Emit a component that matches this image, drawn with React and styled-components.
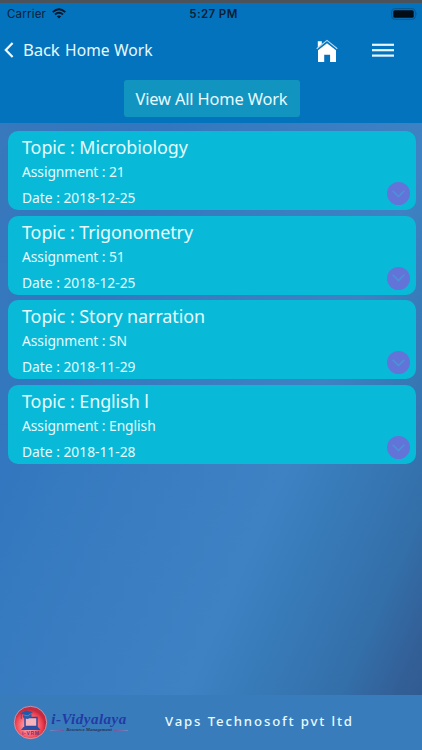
import React from 'react'
import styled, { createGlobalStyle } from 'styled-components'

const GlobalStyle = createGlobalStyle`
    * {
        box-sizing: border-box;
    }
    body {
        margin: 0;
        font-family: "Noto Sans", "Open Sans", sans-serif;
    }
`;

const Screen = styled.div`
    width: 422px;
    height: 750px;
    display: flex;
    flex-direction: column;
    overflow: hidden;
    color: #e6faff;
    background: #0473bd;
    border-top: 3px solid #4b5259;
    white-space: nowrap;
`;

const StatusBar = styled.div`
    height: 21px;
    padding: 0 4px 0 7px;
    display: grid;
    grid-template-columns: 1fr auto 1fr;
    align-items: center;
    color: #0a2036;
    font-family: Inter, sans-serif;
    font-size: 11.5px;
`;

const Carrier = styled.div`
    display: flex;
    align-items: center;
    gap: 6px;
    letter-spacing: 0.2px;
`;

const Clock = styled.div`
    font-weight: 600;
    letter-spacing: 0.4px;
    padding-left: 2px;
`;

const BatteryIcon = styled.svg`
    justify-self: end;
`;

const NavBar = styled.div`
    height: 52px;
    padding: 0 28px 0 4px;
    display: flex;
    align-items: center;
`;

const Back = styled.div`
    display: flex;
    align-items: center;
    gap: 9px;
    width: 61px;
    padding-bottom: 1px;
    font-size: 16.8px;
    letter-spacing: -0.2px;
`;

const Title = styled.div`
    flex: 1;
    font-size: 15.6px;
    letter-spacing: 0.1px;
`;

const NavIcons = styled.div`
    display: flex;
    align-items: center;
    gap: 34px;
    padding-top: 1px;
`;

const Toolbar = styled.div`
    height: 47px;
    padding: 4px 0 0 1px;
    display: flex;
    justify-content: center;
    align-items: flex-start;
`;

const ViewAllButton = styled.button`
    width: 176px;
    height: 37px;
    padding: 0 0 1px;
    border: 0;
    border-radius: 3px;
    background: #1195c0;
    color: inherit;
    font-family: inherit;
    font-size: 16.4px;
    letter-spacing: -0.15px;
`;

const List = styled.div`
    flex: 1;
    padding: 8px 6.5px 0 8px;
    display: flex;
    flex-direction: column;
    gap: 5.7px;
    background: linear-gradient(114deg, #3878bc 0%, #3277bf 22%, #397cc0 42%, #3e82c4 65%, #387bb9 74%, #336fa9 88%, #335f97 96%, #305b92 100%);
`;

const Card = styled.div`
    height: 79px;
    padding: 5px 5.5px 5px 14px;
    display: flex;
    justify-content: space-between;
    align-items: flex-end;
    border-radius: 10px;
    background: #08bad7;
`;

const CardBody = styled.div`
    height: 69px;
    display: flex;
    flex-direction: column;
`;

const Topic = styled.div`
    height: 23px;
    line-height: 23px;
    font-size: 17.9px;
    letter-spacing: -0.07px;
`;

const Detail = styled.div`
    height: 26px;
    flex-shrink: 0;
    line-height: 26px;
    font-size: 13.8px;
    letter-spacing: ${({ $spacing }) => $spacing};
`;

const ExpandButton = styled.button`
    width: 23px;
    height: 23px;
    padding: 0;
    display: flex;
    align-items: center;
    justify-content: center;
    border: 0;
    border-radius: 50%;
    background: #6374d8;
`;

const Footer = styled.div`
    height: 55px;
    padding-left: 13px;
    display: flex;
    align-items: center;
    background: #397cbc;
`;

const Brand = styled.div`
    display: flex;
    align-items: center;
    gap: 2px;
    width: 152px;
`;

const BrandText = styled.div`
    display: flex;
    flex-direction: column;
    align-items: center;
    width: 78px;
`;

const BrandName = styled.div`
    color: #233aa4;
    font-family: "Liberation Serif", serif;
    font-size: 15px;
    font-weight: 700;
    font-style: italic;
    line-height: 15px;
    letter-spacing: 0.5px;
`;

const Tagline = styled.div`
    display: flex;
    align-items: center;
    gap: 2px;
    color: #263257;
    font-family: "Liberation Serif", serif;
    font-size: 4.8px;
    font-weight: 700;
    font-style: italic;
    line-height: 6px;
`;

const Flourish = styled.span`
    width: 14px;
    height: 1px;
    background: linear-gradient(${({ $to }) => $to}, #688cc0, #7950a0);
`;

const Company = styled.div`
    font-size: 13.2px;
    font-weight: 500;
    letter-spacing: 1.85px;
    padding-bottom: 4px;
`;

const homeWork = [
    { topic: 'Microbiology', assignment: '21', date: '2018-12-25' },
    { topic: 'Trigonometry', assignment: '51', date: '2018-12-25' },
    { topic: 'Story narration', assignment: 'SN', date: '2018-11-29' },
    { topic: 'English l', assignment: 'English', date: '2018-11-28' },
];

const WifiIcon = () => (
    <svg width="14" height="11" viewBox="0 0 14 11" fill="none" stroke="#07182a" strokeWidth="1.9">
        <path d="M0.7 4.1Q7 -1.6 13.3 4.1" />
        <path d="M3 6.5Q7 3 11 6.5" />
        <path d="M4.8 8.3Q7 6.5 9.2 8.3L7 10.6Z" fill="#07182a" stroke="none" />
    </svg>
);

const Battery = () => (
    <BatteryIcon width="27" height="12" viewBox="0 0 27 12">
        <rect x="0.7" y="0.7" width="23.6" height="10.6" rx="3" fill="none" stroke="#0a5489" />
        <rect x="2.3" y="2.3" width="20.4" height="7.4" rx="1.5" fill="#020d18" />
        <path d="M25.3 4.2Q26.7 6 25.3 7.8Z" fill="#0a5489" />
    </BatteryIcon>
);

const BackIcon = () => (
    <svg width="10" height="16" viewBox="0 0 10 16" fill="none" stroke="#effaff" strokeWidth="2.2">
        <path d="M8.6 1L1.8 8L8.6 15" />
    </svg>
);

const HomeIcon = () => (
    <svg width="22" height="24" viewBox="0 0 22 24" fill="#fff">
        <path d="M1.8 2.2H5.8V5L1.8 8.8Z" />
        <path d="M11 4.2L20 11.3V23H14.1V15.7H8.2V23H2V11.3Z" />
        <path d="M0.7 9.7L11 1.4L21.3 9.7" fill="none" stroke="#b5dcf4" strokeWidth="1.1" />
    </svg>
);

const MenuIcon = () => (
    <svg width="22" height="15" viewBox="0 0 22 15" fill="#e5f6ff">
        <rect y="0.7" width="22" height="2.2" />
        <rect y="6.1" width="22" height="2.2" />
        <rect y="11.5" width="22" height="2.2" />
    </svg>
);

const ChevronIcon = () => (
    <svg width="13" height="8" viewBox="0 0 13 8" fill="none" stroke="#4596d9" strokeWidth="1.5">
        <path d="M0.7 0.8L6.5 6.6L12.3 0.8" />
    </svg>
);

const Logo = () => (
    <svg width="35" height="35" viewBox="0 0 35 35">
        <defs>
            <radialGradient id="logoRed" cx="45%" cy="60%">
                <stop offset="0" stopColor="#ffc3c7" />
                <stop offset="0.45" stopColor="#fa7f88" />
                <stop offset="0.85" stopColor="#ed3c4b" />
                <stop offset="1" stopColor="#c42b40" />
            </radialGradient>
        </defs>
        <circle cx="17.5" cy="17.5" r="16.2" fill="url(#logoRed)" stroke="#cfa6b9" strokeWidth="0.8" />
        <path d="M12 12.5H24V21.5H12Z" fill="#f7b3bb" stroke="#2c489f" strokeWidth="1.5" />
        <path d="M10.5 22H25L27.5 25H8Z" fill="#2b4fa2" />
        <path d="M7 8.5L13 5.5L20 7L14.5 10.5Z" fill="#185eaf" />
        <path d="M10 10L14.5 11.3L18.5 8.8V12L14.5 14L10 12.5Z" fill="#2560ae" />
        <path d="M8.3 9V14" stroke="#2761b0" strokeWidth="1" />
        <text x="17.5" y="29.7" textAnchor="middle" fontSize="5" fontWeight="700" fontFamily="Liberation Sans, sans-serif" fill="#683582" textLength="17">i-VRM</text>
    </svg>
);

const HomeWorkCard = ({ item }) => (
    <Card>
        <CardBody>
            <Topic>Topic : {item.topic}</Topic>
            <Detail $spacing="-0.05px">Assignment : {item.assignment}</Detail>
            <Detail $spacing="0px">Date : {item.date}</Detail>
        </CardBody>
        <ExpandButton aria-label="Expand">
            <ChevronIcon />
        </ExpandButton>
    </Card>
);

const App = () => {
    return (
        <>
            <GlobalStyle />
            <Screen>
                <StatusBar>
                    <Carrier>Carrier <WifiIcon /></Carrier>
                    <Clock>5:27 PM</Clock>
                    <Battery />
                </StatusBar>
                <NavBar>
                    <Back><BackIcon />Back</Back>
                    <Title>Home Work</Title>
                    <NavIcons>
                        <HomeIcon />
                        <MenuIcon />
                    </NavIcons>
                </NavBar>
                <Toolbar>
                    <ViewAllButton>View All Home Work</ViewAllButton>
                </Toolbar>
                <List>
                    {homeWork.map((item) => (
                        <HomeWorkCard key={item.topic} item={item} />
                    ))}
                </List>
                <Footer>
                    <Brand>
                        <Logo />
                        <BrandText>
                            <BrandName>i-Vidyalaya</BrandName>
                            <Tagline>
                                <Flourish $to="to right" />
                                Resource Management
                                <Flourish $to="to left" />
                            </Tagline>
                        </BrandText>
                    </Brand>
                    <Company>Vaps Technosoft pvt ltd</Company>
                </Footer>
            </Screen>
        </>
    );
};

export default App
